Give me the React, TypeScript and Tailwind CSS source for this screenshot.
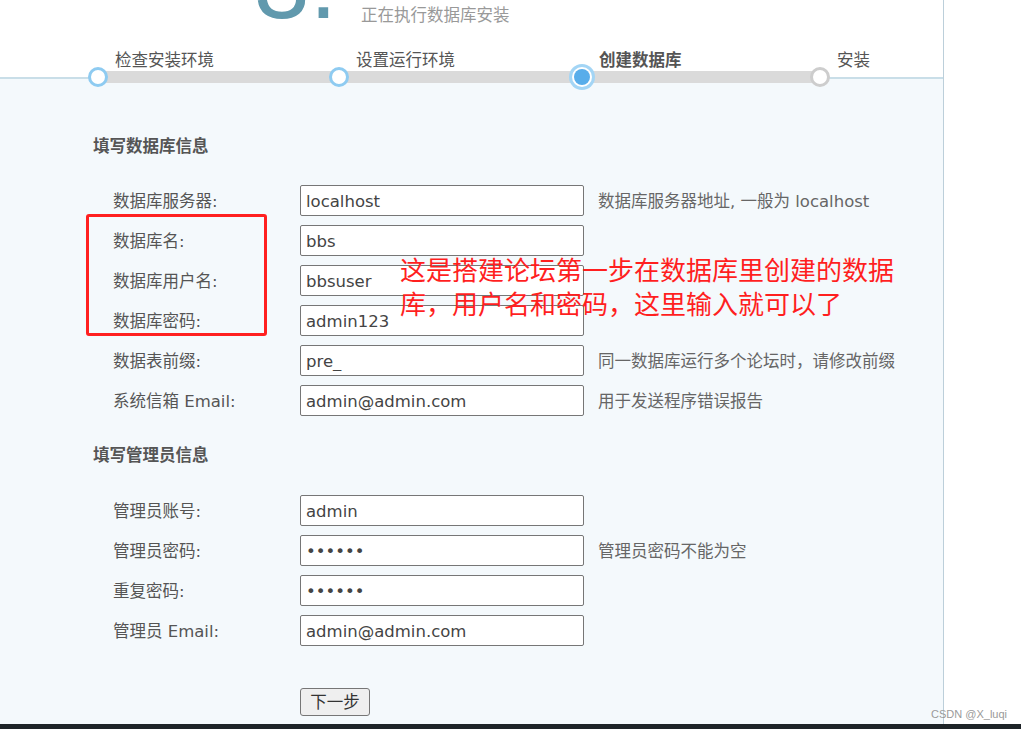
import React from 'react';

interface Field {
    label: string;
    value: string;
    hint?: string;
    type?: string;
}

const dbFields: Field[] = [
    { label: '数据库服务器:', value: 'localhost', hint: '数据库服务器地址, 一般为 localhost' },
    { label: '数据库名:', value: 'bbs' },
    { label: '数据库用户名:', value: 'bbsuser' },
    { label: '数据库密码:', value: 'admin123' },
    { label: '数据表前缀:', value: 'pre_', hint: '同一数据库运行多个论坛时，请修改前缀' },
    { label: '系统信箱 Email:', value: 'admin@admin.com', hint: '用于发送程序错误报告' },
];

const adminFields: Field[] = [
    { label: '管理员账号:', value: 'admin' },
    { label: '管理员密码:', value: '123456', type: 'password', hint: '管理员密码不能为空' },
    { label: '重复密码:', value: '123456', type: 'password' },
    { label: '管理员 Email:', value: 'admin@admin.com' },
];

const FieldRow: React.FC<{ field: Field }> = ({ field }) => (
    <div className="flex items-center h-[31px] pl-[20px]">
        <label className="w-[187px] pt-[3px] text-[#555]">{field.label}</label>
        <input
            type={field.type ?? 'text'}
            defaultValue={field.value}
            readOnly
            className="w-[284px] h-[31px] border border-[#767676] rounded-[2px] bg-white px-[5px] pt-[2px] text-[#444] outline-none"
        />
        {field.hint && <span className="ml-[14px] pt-[3px] text-[#666]">{field.hint}</span>}
    </div>
);

const steps = [
    { label: '检查安装环境', state: 'done', width: 'w-[241px]' },
    { label: '设置运行环境', state: 'done', width: 'w-[243px]' },
    { label: '创建数据库', state: 'current', width: 'w-[238px]' },
    { label: '安装', state: 'todo', width: 'w-[120px]' },
];

const StepDot: React.FC<{ state: string }> = ({ state }) => {
    if (state === 'current') {
        return (
            <div className="w-[26px] h-[26px] rounded-full bg-[#a3d5f5] p-[3px]">
                <div className="w-full h-full rounded-full bg-white p-[2px]">
                    <div className="w-full h-full rounded-full bg-[#58adea]"></div>
                </div>
            </div>
        );
    }
    if (state === 'done') {
        return <div className="w-[20px] h-[20px] rounded-full border-[3px] border-[#8ecbf1] bg-white"></div>;
    }
    return <div className="w-[20px] h-[20px] rounded-full border-[3px] border-[#cdcdcd] bg-white"></div>;
};

export default function App() {
    return (
        <div className="relative w-[1021px] h-[729px] overflow-hidden bg-white text-[16.5px] font-['DejaVu_Sans','Noto_Sans_CJK_SC',sans-serif]">
            <div className="w-[944px] h-[724px] border-r border-[#bccfda] flex flex-col">
                {/* Header with step bar */}
                <div className="relative z-10 h-[77px] shrink-0">
                    <div className="flex items-start h-[48px]">
                        <div className="ml-[254px] w-[107px] -mt-[67px] h-[100px] text-[100px] leading-[100px] text-[#6199ad] font-['Liberation_Sans',sans-serif] whitespace-nowrap">
                            3.
                        </div>
                        <div className="mt-[4px] leading-[24px] text-[#999]">正在执行数据库安装</div>
                    </div>

                    <div className="absolute left-[98px] top-[71px] w-[722px] h-[12px] bg-[#dadada]"></div>

                    <div className="relative flex h-[29px] pl-[85px]">
                        {steps.map((s) => (
                            <div key={s.label} className={`flex items-start shrink-0 ${s.width}`}>
                                <div className="w-[26px] h-[26px] mt-[16px] flex items-center justify-center shrink-0">
                                    <StepDot state={s.state} />
                                </div>
                                <div className={`ml-[4px] mt-[1px] leading-[24px] text-[#555] whitespace-nowrap ${s.state === 'current' ? 'font-bold' : ''}`}>
                                    {s.label}
                                </div>
                            </div>
                        ))}
                    </div>
                </div>

                {/* Form body */}
                <div className="flex-1 bg-[#f4f9fc] border-t-2 border-[#c9dee8] pl-[93px] pt-[56px]">
                    <h2 className="font-bold text-[#555] leading-[24px]">填写数据库信息</h2>
                    <div className="mt-[26px] flex flex-col gap-[9px]">
                        {dbFields.map((f) => (
                            <FieldRow key={f.label} field={f} />
                        ))}
                    </div>

                    <h2 className="mt-[28px] font-bold text-[#555] leading-[24px]">填写管理员信息</h2>
                    <div className="mt-[27px] flex flex-col gap-[9px]">
                        {adminFields.map((f) => (
                            <FieldRow key={f.label} field={f} />
                        ))}
                    </div>

                    <div className="mt-[42px] pl-[207px]">
                        <button className="w-[70px] h-[28px] bg-[#efefef] border border-[#767676] rounded-[3px] pt-[2px] text-[#333] leading-none">
                            下一步
                        </button>
                    </div>
                </div>
            </div>

            <div className="h-[5px] bg-[#1e2428]"></div>

            {/* Annotation overlay */}
            <div className="absolute left-[86px] top-[214px] w-[181px] h-[122px] border-[3px] border-[#ff2020] rounded-[3px]"></div>
            <div className="absolute left-[400px] top-[252px] text-[26px] leading-[34px] text-[#ff1f1f] font-['Noto_Sans_CJK_SC',sans-serif] whitespace-nowrap">
                <div>这是搭建论坛第一步在数据库里创建的数据</div>
                <div>库，用户名和密码，这里输入就可以了</div>
            </div>

            <div className="absolute right-[14px] top-[707px] text-[11px] leading-[14px] text-[#9a9a9a] font-['Liberation_Sans',sans-serif]">
                CSDN @X_luqi
            </div>
        </div>
    );
}
